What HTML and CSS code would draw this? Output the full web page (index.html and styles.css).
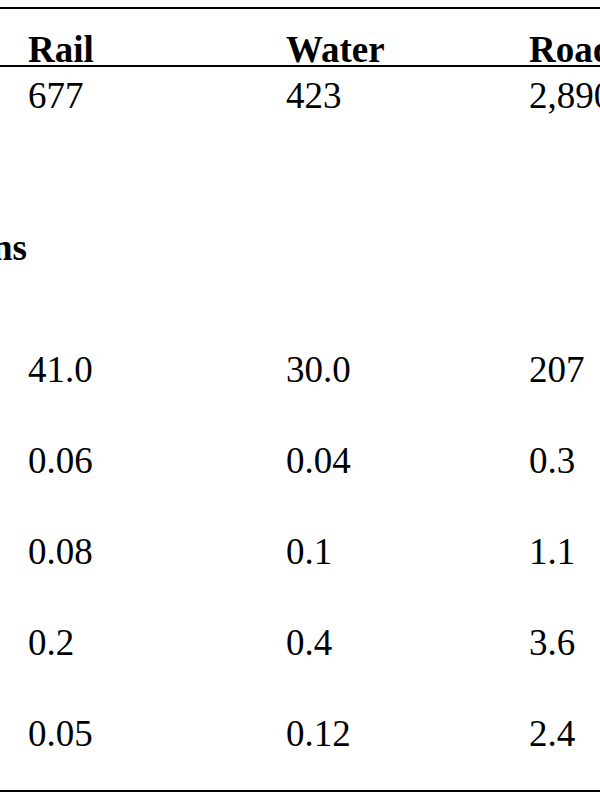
FILE: index.html
```html
<!DOCTYPE html>
<html lang="en">
<head>
<meta charset="utf-8">
<title>Transport table</title>
<link rel="stylesheet" href="styles.css">
</head>
<body>
<div class="table">
  <div class="row head">
    <div class="cell label"></div>
    <div class="cell">Rail</div>
    <div class="cell">Water</div>
    <div class="cell">Road</div>
  </div>
  <div class="row count">
    <div class="cell label"></div>
    <div class="cell">677</div>
    <div class="cell">423</div>
    <div class="cell">2,890</div>
  </div>
  <div class="row section">
    <div class="cell label strong">Emissions</div>
    <div class="cell"></div>
    <div class="cell"></div>
    <div class="cell"></div>
  </div>
  <div class="row data first">
    <div class="cell label"></div>
    <div class="cell">41.0</div>
    <div class="cell">30.0</div>
    <div class="cell">207</div>
  </div>
  <div class="row data">
    <div class="cell label"></div>
    <div class="cell">0.06</div>
    <div class="cell">0.04</div>
    <div class="cell">0.3</div>
  </div>
  <div class="row data">
    <div class="cell label"></div>
    <div class="cell">0.08</div>
    <div class="cell">0.1</div>
    <div class="cell">1.1</div>
  </div>
  <div class="row data">
    <div class="cell label"></div>
    <div class="cell">0.2</div>
    <div class="cell">0.4</div>
    <div class="cell">3.6</div>
  </div>
  <div class="row data last">
    <div class="cell label"></div>
    <div class="cell">0.05</div>
    <div class="cell">0.12</div>
    <div class="cell">2.4</div>
  </div>
</div>
</body>
</html>
```
FILE: styles.css
```css
html, body {
  margin: 0;
  padding: 0;
  background: #ffffff;
  overflow: hidden;
}

body {
  width: 600px;
  height: 800px;
  font-family: "Liberation Serif", "Times New Roman", serif;
  font-size: 37px;
  line-height: 30px;
  color: #000000;
}

.table {
  margin-top: 7px;
  margin-left: -200px;
  width: 1000px;
  border-top: 2px solid #000;
  border-bottom: 2px solid #000;
}

.row {
  display: grid;
  grid-template-columns: 228px 258px 243px 271px;
  height: 30px;
}

.cell {
  white-space: nowrap;
  height: 30px;
}

.label {
  text-align: right;
  padding-right: 1px;
}

.strong {
  font-weight: bold;
}

.head {
  font-weight: bold;
  padding-top: 26px;
  border-bottom: 2px solid #000;
}

.count {
  padding-top: 14px;
}

.section {
  padding-top: 122px;
}

.data {
  padding-top: 61px;
}

.data.first {
  padding-top: 92px;
}

.data.last {
  padding-bottom: 41px;
}
```
